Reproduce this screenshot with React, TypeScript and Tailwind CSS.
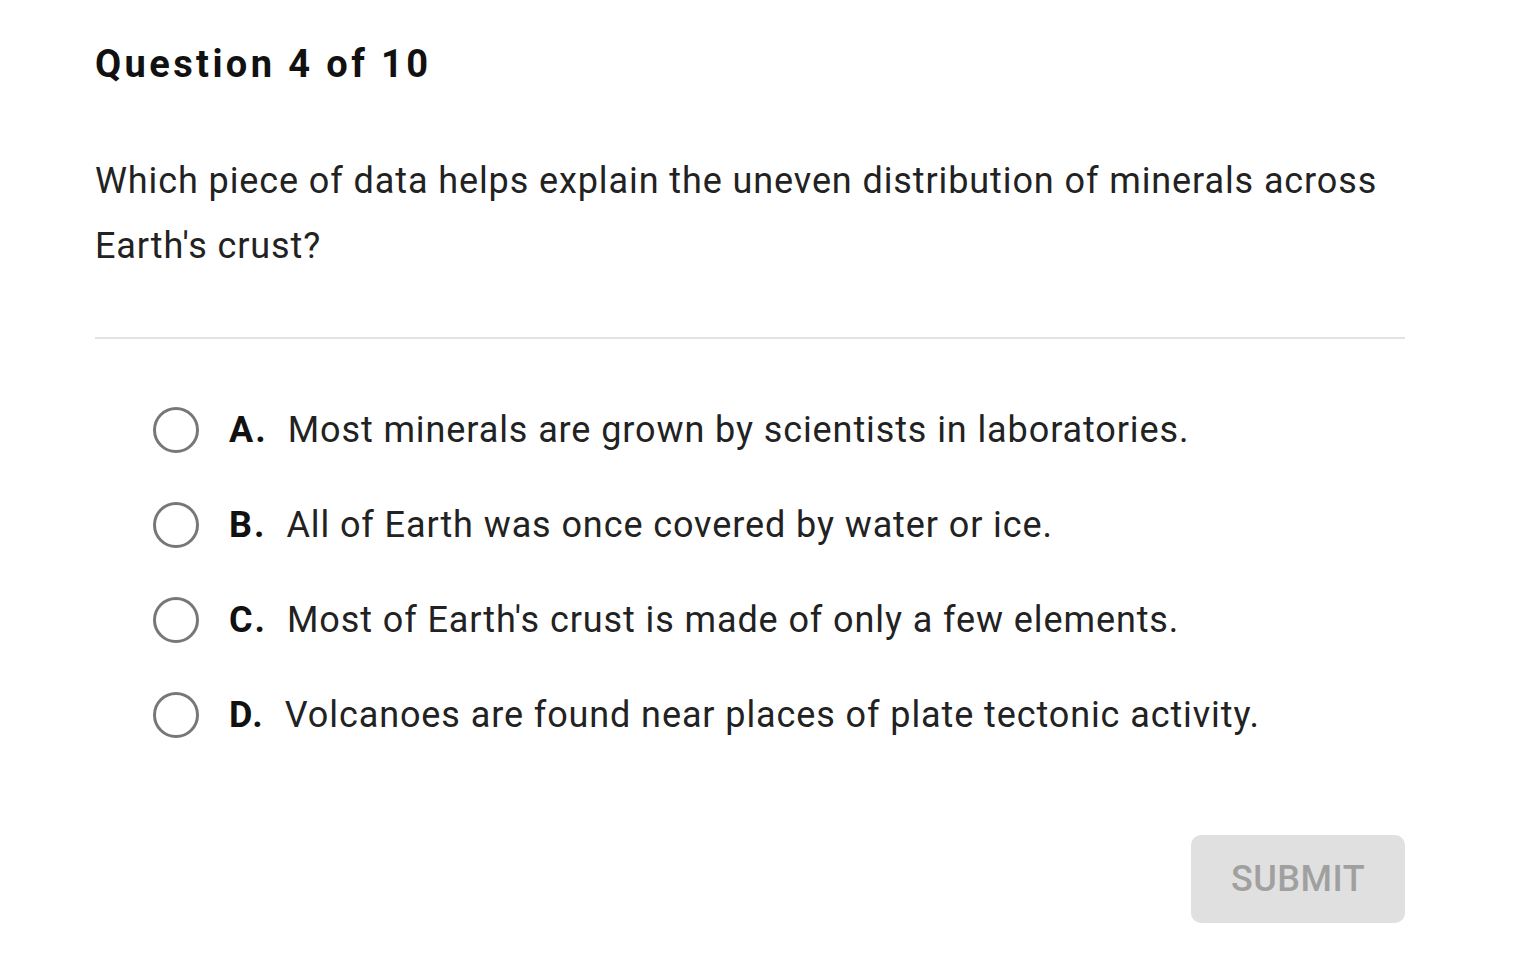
import { useState } from "react";

const options = [
  { letter: "A.", text: "Most minerals are grown by scientists in laboratories." },
  { letter: "B.", text: "All of Earth was once covered by water or ice." },
  { letter: "C.", text: "Most of Earth's crust is made of only a few elements." },
  { letter: "D.", text: "Volcanoes are found near places of plate tectonic activity." },
];

export default function App() {
  const [selected, setSelected] = useState<number | null>(null);

  return (
    <div className="min-h-screen bg-white font-['Roboto',sans-serif] text-[#212121]">
      <div className="ml-[95px] w-[1310px] pt-[41px]">
        <h1 className="text-[38px] font-bold leading-[46px] tracking-[3.4px] text-[#111]">
          Question 4 of 10
        </h1>

        <p className="mt-[62px] text-[36px] leading-[65px] tracking-[0.9px] text-[#222]">
          Which piece of data helps explain the uneven distribution of minerals across
          Earth's crust?
        </p>

        <div className="mt-[58px] h-[2px] bg-[#e3e3e3]" />

        <div className="mt-[68px] flex flex-col gap-[49px] pl-[58px]">
          {options.map((o, i) => (
            <button
              key={o.letter}
              onClick={() => setSelected(i)}
              className="flex h-[46px] items-center text-left"
            >
              <span className="flex h-[46px] w-[46px] shrink-0 items-center justify-center rounded-full border-[3px] border-[#777]">
                {selected === i && <span className="h-[24px] w-[24px] rounded-full bg-[#777]" />}
              </span>
              <span className="ml-[30px] mr-[20px] text-[36px] font-bold tracking-[2px] text-[#111]">
                {o.letter}
              </span>
              <span className="text-[36px] tracking-[0.9px] text-[#222]">{o.text}</span>
            </button>
          ))}
        </div>

        <div className="mt-[97px] flex justify-end">
          <button
            disabled={selected === null}
            className="h-[88px] w-[214px] rounded-[10px] bg-[#e0e0e0] text-[36px] font-medium tracking-[0.5px] text-[#a0a0a0]"
          >
            SUBMIT
          </button>
        </div>
      </div>
    </div>
  );
}
